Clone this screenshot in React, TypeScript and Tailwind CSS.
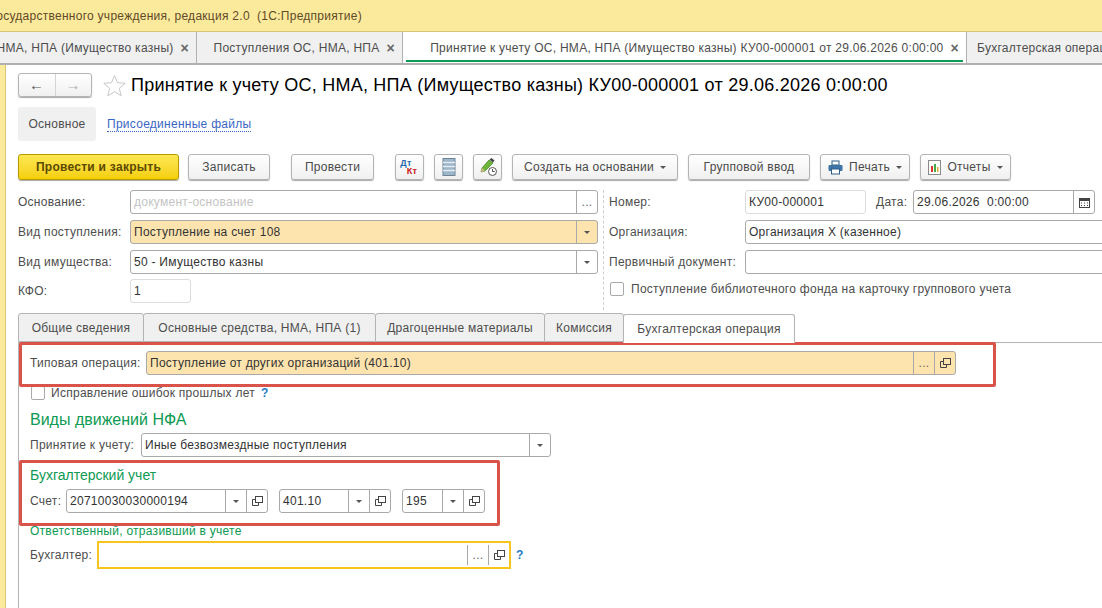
import type { ReactNode } from "react";

const btn =
  "flex h-[26px] shrink-0 items-center justify-center rounded-[3px] border border-[#b4b4b4] bg-gradient-to-b from-white to-[#f0f0f0] shadow-[0_1px_1px_#a8a8a8] text-[#4a4a4a]";

function Caret() {
  return <span className="h-0 w-0 border-x-[3px] border-t-[3px] border-x-transparent border-t-[#555]" />;
}

function CopyIcon() {
  return (
    <svg width="12" height="12" viewBox="0 0 12 12" fill="none" stroke="#444" strokeWidth="1">
      <rect x="4.5" y="1.5" width="7" height="6" />
      <path d="M4.5 4.5h-3v6h6v-3" />
    </svg>
  );
}

function Cell({ children }: { children: ReactNode }) {
  return (
    <span className="flex w-[21px] shrink-0 items-center justify-center self-stretch border-l border-[#a9a9a9] text-[#666]">
      {children}
    </span>
  );
}

function Field({
  className,
  value,
  placeholder,
  cells,
}: {
  className: string;
  value?: string;
  placeholder?: string;
  cells?: ReactNode;
}) {
  return (
    <div className={`flex h-[24px] shrink-0 items-center rounded-[3px] border border-[#a9a9a9] ${className}`}>
      <span className={`min-w-0 flex-1 truncate whitespace-pre pl-[3px] ${placeholder ? "text-[#c4c4c4]" : "text-[#333]"}`}>
        {value ?? placeholder}
      </span>
      {cells}
    </div>
  );
}

function Tab({ label, active, width }: { label: string; active?: boolean; width: string }) {
  return (
    <div
      className={`flex h-[29px] items-center justify-center rounded-t-[3px] border border-[#b4b4b4] ${width} ${
        active ? "relative z-10 -mb-px border-b-white bg-white" : "bg-[#f0f0f0]"
      }`}
    >
      {label}
    </div>
  );
}

function Close() {
  return <span className="ml-[7px] text-[14px] leading-none font-bold text-[#666]">×</span>;
}

function Star() {
  return (
    <svg width="23" height="23" viewBox="0 0 23 23" fill="#fff" stroke="#c8c8c8">
      <path d="M11.5 1.5l3 7.2 7.7.6-5.9 5 1.9 7.5-6.7-4.1-6.7 4.1 1.9-7.5-5.9-5 7.7-.6z" />
    </svg>
  );
}

function ListIcon() {
  return (
    <svg width="14" height="18" viewBox="0 0 14 18">
      <rect x="1" y="0.5" width="12" height="17" fill="#9db6c9" stroke="#6d8496" />
      <path d="M1 4.5h12M1 8.5h12M1 12.5h12" stroke="#e4ecf2" strokeWidth="1.5" />
    </svg>
  );
}

function PenClockIcon() {
  return (
    <svg width="20" height="20" viewBox="0 0 20 20">
      <path d="M3 15l1-4 7-8 4 3-8 8z" fill="#6fb53a" stroke="#3f7f1e" strokeWidth="0.7" />
      <path d="M11.5 2.5l2-1.5 3 2.500-1.500 2z" fill="#444" />
      <path d="M3 15l1-4 3 3z" fill="#d9b98a" />
      <circle cx="14.500" cy="14.500" r="4" fill="#fff" stroke="#555" />
      <path d="M14.500 12v2.500h2.200" fill="none" stroke="#555" />
    </svg>
  );
}

function PrinterIcon() {
  return (
    <svg width="15" height="15" viewBox="0 0 15 15">
      <rect x="4" y="1" width="7" height="4" fill="#fff" stroke="#2f5f8a" />
      <rect x="0.500" y="5" width="14" height="6" rx="1" fill="#3d74a5" />
      <rect x="3.500" y="9" width="8" height="5" fill="#fff" stroke="#2f5f8a" />
    </svg>
  );
}

function ReportIcon() {
  return (
    <svg width="13" height="15" viewBox="0 0 13 15">
      <rect x="0.500" y="0.500" width="12" height="14" fill="#fff" stroke="#8a8a8a" />
      <rect x="3" y="6" width="2" height="6" fill="#d33" />
      <rect x="6" y="4" width="2" height="8" fill="#4a4" />
      <rect x="9" y="7" width="1.500" height="5" fill="#da3" />
    </svg>
  );
}

function CalendarIcon() {
  return (
    <svg width="11" height="11" viewBox="0 0 11 11">
      <rect x="0.500" y="1.500" width="10" height="9" fill="#fff" stroke="#444" />
      <rect x="0.500" y="1.500" width="10" height="2.500" fill="#444" />
      <path d="M2 6h1M5 6h1M8 6h1M2 8.500h1M5 8.500h1M8 8.500h1" stroke="#444" />
    </svg>
  );
}

function Label({ children, width }: { children: ReactNode; width: string }) {
  return <span className={`shrink-0 whitespace-nowrap ${width}`}>{children}</span>;
}

export default function App() {
  return (
    <div
      className="relative h-[608px] w-[1102px] overflow-hidden bg-white text-[12px] tracking-[0.27px] text-[#4d4d4d]"
      style={{ fontFamily: '"Liberation Sans", Arial, sans-serif' }}
    >
      {/* TITLE BAR */}
      <div className="flex h-[32px] items-center border-b border-[#d5c678] bg-[#fbe99c] text-[#5f4a28]">
        <div className="flex w-[362px] justify-end overflow-hidden whitespace-pre">
          Бухгалтерия государственного учреждения, редакция 2.0  (1С:Предприятие)
        </div>
      </div>

      {/* OPEN WINDOWS */}
      <div className="flex h-[33px] items-stretch border-b-2 border-[#b0b0b0] bg-[#f0f0f0] whitespace-nowrap">
        <div className="flex w-[197px] shrink-0 items-center justify-end overflow-hidden border-r border-[#b0b0b0] pr-[7px]">
          <span>Принятие к учету ОС, НМА, НПА (Имущество казны)</span>
          <Close />
        </div>
        <div className="flex w-[206px] shrink-0 items-center justify-end border-r border-[#b0b0b0] pr-[7px]">
          Поступления ОС, НМА, НПА
          <Close />
        </div>
        <div className="relative flex w-[564px] shrink-0 items-center justify-end border-r border-[#b0b0b0] bg-white pr-[7px]">
          Принятие к учету ОС, НМА, НПА (Имущество казны) КУ00-000001 от 29.06.2026 0:00:00
          <Close />
          <span className="absolute right-[3px] bottom-[1px] left-[3px] h-[2px] bg-[#0d9a52]" />
        </div>
        <div className="flex items-center pl-[10px]">Бухгалтерская операция</div>
      </div>

      <div className="flex h-[543px]">
        <div className="w-[6px] shrink-0 border-r border-[#d5c678] bg-[#fbe99c]" />
        <div className="min-w-0 flex-1 pl-[12px]">
          {/* HEADER */}
          <div className="mt-[8px] flex h-[24px] items-center">
            <div className="flex h-[24px] w-[74px] rounded-[3px] border border-[#b4b4b4] bg-gradient-to-b from-white to-[#f0f0f0] shadow-[0_1px_1px_#a8a8a8]">
              <span className="flex flex-1 items-center justify-center text-[15px] font-bold text-[#555]">←</span>
              <span className="flex flex-1 items-center justify-center border-l border-[#d4d4d4] text-[15px] font-bold text-[#b0b0b0]">→</span>
            </div>
            <span className="ml-[11px]">
              <Star />
            </span>
            <h1 className="ml-[5px] text-[18px] tracking-[0.24px] whitespace-nowrap text-black">
              Принятие к учету ОС, НМА, НПА (Имущество казны) КУ00-000001 от 29.06.2026 0:00:00
            </h1>
          </div>

          <div className="mt-[10px] flex h-[34px] items-center">
            <div className="flex h-full w-[78px] items-center justify-center rounded-[3px] bg-[#f0f0f0]">Основное</div>
            <span className="ml-[11px] border-b border-dotted border-[#3a66c4] leading-[14px] text-[#3a66c4]">
              Присоединенные файлы
            </span>
          </div>

          {/* TOOLBAR */}
          <div className="mt-[13px] flex h-[26px] items-center">
            <button className="flex h-[26px] w-[161px] items-center justify-center rounded-[3px] border border-[#b89a00] bg-gradient-to-b from-[#ffe84f] to-[#f4cf00] font-bold text-[#5b4a00] shadow-[0_1px_1px_#a8a8a8]">
              Провести и закрыть
            </button>
            <div className={`${btn} ml-[9px] w-[82px]`}>Записать</div>
            <div className={`${btn} ml-[21px] w-[83px]`}>Провести</div>
            <div className={`${btn} ml-[21px] w-[29px] flex-col text-[9px] leading-[8px] font-bold`}>
              <span className="-ml-[7px] text-[#2a6aa8]">Дт</span>
              <span className="ml-[5px] text-[#c81818]">Кт</span>
            </div>
            <div className={`${btn} ml-[10px] w-[29px]`}>
              <ListIcon />
            </div>
            <div className={`${btn} ml-[10px] w-[29px]`}>
              <PenClockIcon />
            </div>
            <div className={`${btn} ml-[10px] w-[166px] gap-[6px]`}>
              Создать на основании
              <Caret />
            </div>
            <div className={`${btn} ml-[10px] w-[122px]`}>Групповой ввод</div>
            <div className={`${btn} ml-[10px] w-[90px] gap-[6px]`}>
              <PrinterIcon />
              Печать
              <Caret />
            </div>
            <div className={`${btn} ml-[10px] w-[91px] gap-[6px]`}>
              <ReportIcon />
              Отчеты
              <Caret />
            </div>
          </div>

          {/* DOCUMENT FIELDS */}
          <div className="mt-[10px] flex h-[120px]">
            <div className="flex w-[580px] shrink-0 flex-col gap-[6px]">
              <div className="flex items-center">
                <Label width="w-[112px]">Основание:</Label>
                <Field className="flex-1" placeholder="документ-основание" cells={<Cell>...</Cell>} />
              </div>
              <div className="flex items-center">
                <Label width="w-[112px]">Вид поступления:</Label>
                <Field className="flex-1 bg-[#fde4af]" value="Поступление на счет 108" cells={<Cell><Caret /></Cell>} />
              </div>
              <div className="flex items-center">
                <Label width="w-[112px]">Вид имущества:</Label>
                <Field className="flex-1" value="50 - Имущество казны" cells={<Cell><Caret /></Cell>} />
              </div>
              <div className="-mt-px flex items-center">
                <Label width="w-[112px]">КФО:</Label>
                <Field className="w-[61px] border-[#dcdcdc]" value="1" />
              </div>
            </div>

            <div className="ml-[5px] h-full w-0 shrink-0 border-l border-dashed border-[#cfcfcf]" />

            <div className="ml-[5px] flex w-[600px] shrink-0 flex-col gap-[6px]">
              <div className="flex items-center">
                <Label width="w-[136px]">Номер:</Label>
                <Field className="w-[121px] border-[#dcdcdc]" value="КУ00-000001" />
                <span className="ml-[10px] w-[37px]">Дата:</span>
                <Field className="w-[182px]" value="29.06.2026  0:00:00" cells={<Cell><CalendarIcon /></Cell>} />
              </div>
              <div className="flex items-center">
                <Label width="w-[136px]">Организация:</Label>
                <Field className="flex-1" value="Организация Х (казенное)" />
              </div>
              <div className="flex items-center">
                <Label width="w-[136px]">Первичный документ:</Label>
                <Field className="flex-1" />
              </div>
              <div className="flex items-center">
                <span className="ml-px h-[14px] w-[14px] shrink-0 rounded-[2px] border border-[#a9a9a9]" />
                <span className="ml-[7px] whitespace-nowrap">Поступление библиотечного фонда на карточку группового учета</span>
              </div>
            </div>
          </div>

          {/* FORM TABS */}
          <div className="mt-[3px] flex h-[29px] items-end">
            <Tab label="Общие сведения" width="w-[126px]" />
            <Tab label="Основные средства, НМА, НПА (1)" width="w-[233px] -ml-px" />
            <Tab label="Драгоценные материалы" width="w-[170px] -ml-px" />
            <Tab label="Комиссия" width="w-[80px] -ml-px" />
            <Tab label="Бухгалтерская операция" active width="w-[172px] -ml-px" />
          </div>
          <div className="h-[300px] border-t border-l border-[#b4b4b4] pl-[11px]">
            <div className="mt-[8px] flex items-center">
              <Label width="w-[116px]">Типовая операция:</Label>
              <Field
                className="w-[810px] bg-[#fde4af]"
                value="Поступление от других организаций (401.10)"
                cells={
                  <>
                    <Cell>...</Cell>
                    <Cell><CopyIcon /></Cell>
                  </>
                }
              />
            </div>

            <div className="mt-[11px] flex h-[14px] items-center">
              <span className="ml-px h-[14px] w-[14px] shrink-0 rounded-[2px] border border-[#a9a9a9]" />
              <span className="ml-[6px]">Исправление ошибок прошлых лет</span>
              <span className="ml-[6px] font-bold text-[#1f7cc4]">?</span>
            </div>

            <h2 className="mt-[10px] text-[16px] leading-[20px] tracking-normal text-[#0d9a52]">Виды движений НФА</h2>

            <div className="mt-[3px] flex items-center">
              <Label width="w-[111px]">Принятие к учету:</Label>
              <Field className="w-[410px]" value="Иные безвозмездные поступления" cells={<Cell><Caret /></Cell>} />
            </div>

            <h2 className="mt-[8px] text-[14px] leading-[20px] tracking-normal text-[#0d9a52]">Бухгалтерский учет</h2>

            <div className="mt-[4px] flex items-center">
              <Label width="w-[36px]">Счет:</Label>
              <Field
                className="w-[202px]"
                value="20710030030000194"
                cells={
                  <>
                    <Cell><Caret /></Cell>
                    <Cell><CopyIcon /></Cell>
                  </>
                }
              />
              <Field
                className="ml-[11px] w-[112px]"
                value="401.10"
                cells={
                  <>
                    <Cell><Caret /></Cell>
                    <Cell><CopyIcon /></Cell>
                  </>
                }
              />
              <Field
                className="ml-[11px] w-[83px]"
                value="195"
                cells={
                  <>
                    <Cell><Caret /></Cell>
                    <Cell><CopyIcon /></Cell>
                  </>
                }
              />
            </div>

            <div className="mt-[10px] h-[16px] leading-[16px] text-[#0d9a52]">Ответственный, отразивший в учете</div>

            <div className="mt-[2px] flex items-center">
              <Label width="w-[67px]">Бухгалтер:</Label>
              <div className="flex h-[28px] w-[414px] items-stretch justify-end border-2 border-[#f6c61f] py-[2px]">
                <Cell>...</Cell>
                <Cell><CopyIcon /></Cell>
              </div>
              <span className="ml-[5px] font-bold text-[#1f7cc4]">?</span>
            </div>
          </div>
        </div>
      </div>

      {/* RED CALLOUTS */}
      <div className="absolute top-[342px] left-[19px] h-[45px] w-[977px] rounded-[2px] border-[3px] border-[#d9534a]" />
      <div className="absolute top-[460px] left-[19px] h-[66px] w-[481px] rounded-[2px] border-[3px] border-[#d9534a]" />
    </div>
  );
}
